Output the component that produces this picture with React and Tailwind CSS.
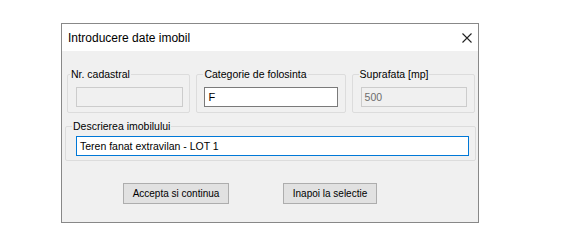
import React from 'react';

const font = { fontFamily: '"Liberation Sans", Arial, sans-serif' };

const Group = ({ label, className = '', legendClass = '', children }) => (
  <fieldset className={`border border-[#dcdcdc] rounded-[2px] ${className}`}>
    <legend className={`px-[1px] text-[10.5px] leading-[13px] text-black ${legendClass}`}>{label}</legend>
    {children}
  </fieldset>
);

const Field = ({ value = '', disabled, focused }) => {
  const look = disabled
    ? 'bg-[#f0f0f0] border-[#cccccc] text-[#6d6d6d] text-[10.5px]'
    : focused
      ? 'bg-white border-[#0078d7] text-black text-[10.5px]'
      : 'bg-white border-[#7a7a7a] text-black text-[11px]';
  return (
    <div className={`h-[20px] w-full border flex items-center px-[3px] leading-none ${look}`}>
      {value}
    </div>
  );
};

const Button = ({ children, className = '' }) => (
  <button className={`h-[21px] bg-[#e1e1e1] border border-[#adadad] text-[10px] text-black leading-none ${className}`}>
    {children}
  </button>
);

export default function App() {
  return (
    <div className="w-[566px] h-[246px] bg-white pl-[61px] pt-[23px]" style={font}>
      <div className="w-[418px] h-[200px] border border-[#888888] bg-[#f0f0f0] flex flex-col">
        {/* barra de titlu */}
        <div className="h-[27px] bg-white flex items-center justify-between pl-[6px] pr-[6px]">
          <span className="text-[12px] text-black">Introducere date imobil</span>
          <svg width="10" height="10" viewBox="0 0 10 10">
            <path d="M0.5 0.5 L9.5 9.5 M9.5 0.5 L0.5 9.5" stroke="#222" strokeWidth="1.1" fill="none" />
          </svg>
        </div>

        <div className="flex flex-col px-[3px]">
          <div className="flex gap-[6px] pl-[2px] mt-[17px]">
            <Group label="Nr. cadastral" legendClass="ml-[-6px]" className="w-[124px] h-[45px] pl-[8px] pr-[6px]">
              <div className="mt-[6px]"><Field disabled /></div>
            </Group>
            <Group label="Categorie de folosinta" legendClass="ml-[-1px]" className="w-[150px] h-[45px] px-[7px]">
              <div className="mt-[6px]"><Field value="F" /></div>
            </Group>
            <Group label="Suprafata [mp]" legendClass="ml-[-2px]" className="w-[124px] h-[45px] pl-[8px] pr-[7px]">
              <div className="mt-[6px]"><Field value="500" disabled /></div>
            </Group>
          </div>

          <Group label="Descrierea imobilului" legendClass="ml-[-4px]" className="mt-[7px] w-[411px] h-[41px] pl-[10px] pr-[6px]">
            <div className="mt-[3px]"><Field value="Teren fanat extravilan - LOT 1" focused /></div>
          </Group>

          <div className="flex mt-[22px] pl-[58px] gap-[54px]">
            <Button className="w-[106px]">Accepta si continua</Button>
            <Button className="w-[94px]">Inapoi la selectie</Button>
          </div>
        </div>
      </div>
    </div>
  );
}
